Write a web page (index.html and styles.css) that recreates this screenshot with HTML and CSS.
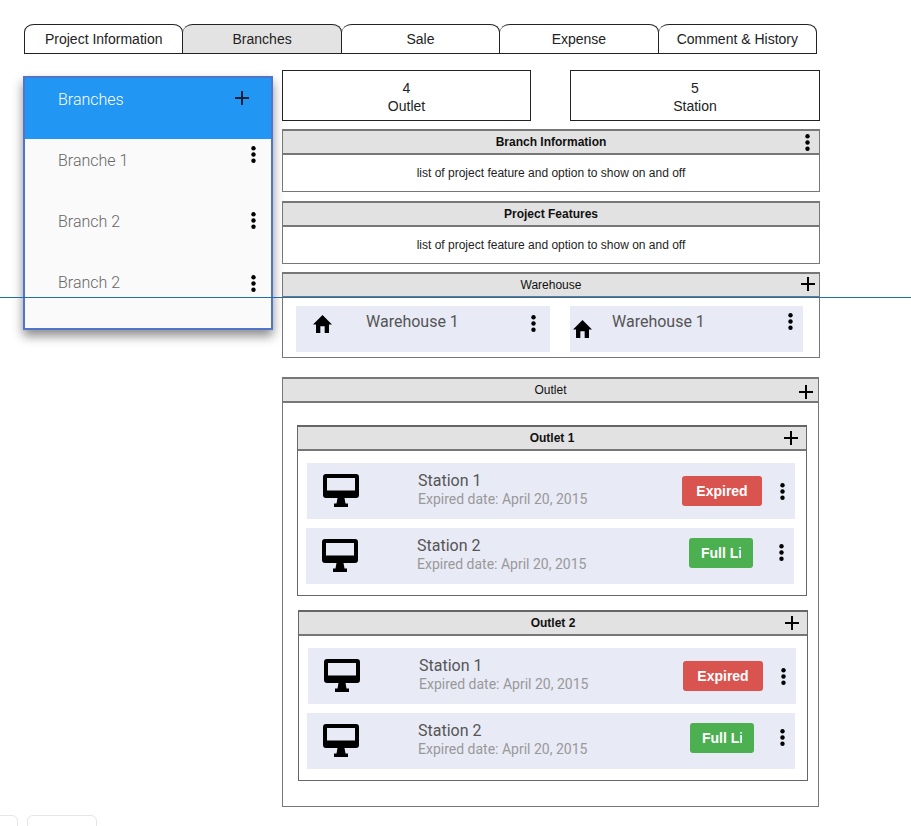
FILE: index.html
```html
<!DOCTYPE html>
<html lang="en">
<head>
<meta charset="utf-8">
<title>Branches</title>
<link rel="stylesheet" href="styles.css">
</head>
<body>
<svg class="defs" width="0" height="0" aria-hidden="true">
  <symbol id="i-plus" viewBox="0 0 16 16"><path d="M8 1v14M1 8h14" fill="none" stroke="currentColor" stroke-width="2"/></symbol>
  <symbol id="i-dots" viewBox="0 0 5 17"><circle cx="2.500" cy="2.300" r="2.200"/><circle cx="2.500" cy="8.500" r="2.200"/><circle cx="2.500" cy="14.700" r="2.200"/></symbol>
  <symbol id="i-home" viewBox="1 2 22 19" preserveAspectRatio="none"><path d="M9.500 21v-7h5v7h5v-9H23L12 2 1 12h3.500v9z"/></symbol>
  <symbol id="i-desk" viewBox="0 0 36 33">
    <path fill-rule="evenodd" d="M3 0h30a3 3 0 0 1 3 3v18a3 3 0 0 1-3 3H3a3 3 0 0 1-3-3V3a3 3 0 0 1 3-3zM4 4v12.500h28V4z"/>
    <path d="M14.500 24h7l1 5.500H25V33H11v-3.500h2.500z"/>
  </symbol>
</svg>
<div class="page">
  <div class="rule"></div>
  <nav class="tabs">
    <a class="tab">Project Information</a>
    <a class="tab tab-active">Branches</a>
    <a class="tab">Sale</a>
    <a class="tab">Expense</a>
    <a class="tab">Comment &amp; History</a>
  </nav>
  <div class="main">
    <aside class="side">
      <div class="side-head">
        <span>Branches</span>
        <svg class="plus side-plus"><use href="#i-plus"/></svg>
      </div>
      <div class="side-row"><span>Branche 1</span><svg class="dots side-dots-1"><use href="#i-dots"/></svg></div>
      <div class="side-row"><span>Branch 2</span><svg class="dots side-dots-2"><use href="#i-dots"/></svg></div>
      <div class="side-row"><span>Branch 2</span><svg class="dots side-dots-3"><use href="#i-dots"/></svg></div>
    </aside>
    <div class="content">
      <div class="stats">
        <div class="stat stat-a"><span>4</span><span>Outlet</span></div>
        <div class="stat"><span>5</span><span>Station</span></div>
      </div>
      <section class="panel">
        <header class="panel-head strong"><span class="title">Branch Information</span><svg class="dots head-dots"><use href="#i-dots"/></svg></header>
        <p class="panel-text">list of project feature and option to show on and off</p>
      </section>
      <section class="panel panel-gap">
        <header class="panel-head strong"><span class="title">Project Features</span></header>
        <p class="panel-text">list of project feature and option to show on and off</p>
      </section>
      <section class="panel panel-ware">
        <header class="panel-head"><span class="title">Warehouse</span><svg class="plus head-plus"><use href="#i-plus"/></svg></header>
        <div class="ware-list">
          <div class="ware ware-a">
            <svg class="home"><use href="#i-home"/></svg>
            <span class="ware-name">Warehouse 1</span>
            <svg class="dots ware-dots-a"><use href="#i-dots"/></svg>
          </div>
          <div class="ware ware-b">
            <svg class="home"><use href="#i-home"/></svg>
            <span class="ware-name">Warehouse 1</span>
            <svg class="dots ware-dots-b"><use href="#i-dots"/></svg>
          </div>
        </div>
      </section>
      <section class="panel panel-outlet">
        <header class="panel-head"><span class="title">Outlet</span><svg class="plus head-plus plus-low"><use href="#i-plus"/></svg></header>
        <div class="outlets">
          <section class="outlet outlet-one">
            <header class="panel-head strong"><span class="title">Outlet 1</span><svg class="plus head-plus plus-inner"><use href="#i-plus"/></svg></header>
            <div class="station">
              <svg class="desk"><use href="#i-desk"/></svg>
              <div class="st-text"><div class="st-name">Station 1</div><div class="st-date">Expired date: April 20, 2015</div></div>
              <span class="badge badge-red">Expired</span>
              <svg class="dots st-dots"><use href="#i-dots"/></svg>
            </div>
            <div class="station station-second">
              <svg class="desk"><use href="#i-desk"/></svg>
              <div class="st-text"><div class="st-name">Station 2</div><div class="st-date">Expired date: April 20, 2015</div></div>
              <span class="badge badge-green"><span class="clip">Full License</span></span>
              <svg class="dots st-dots st-dots-up"><use href="#i-dots"/></svg>
            </div>
          </section>
          <section class="outlet outlet-two">
            <header class="panel-head strong"><span class="title">Outlet 2</span><svg class="plus head-plus plus-inner"><use href="#i-plus"/></svg></header>
            <div class="station">
              <svg class="desk"><use href="#i-desk"/></svg>
              <div class="st-text"><div class="st-name">Station 1</div><div class="st-date">Expired date: April 20, 2015</div></div>
              <span class="badge badge-red">Expired</span>
              <svg class="dots st-dots"><use href="#i-dots"/></svg>
            </div>
            <div class="station station-second">
              <svg class="desk"><use href="#i-desk"/></svg>
              <div class="st-text"><div class="st-name">Station 2</div><div class="st-date">Expired date: April 20, 2015</div></div>
              <span class="badge badge-green"><span class="clip">Full License</span></span>
              <svg class="dots st-dots st-dots-up"><use href="#i-dots"/></svg>
            </div>
          </section>
        </div>
      </section>
    </div>
  </div>
  <div class="foot">
    <span class="foot-tab foot-a"></span>
    <span class="foot-tab foot-b"></span>
  </div>
</div>
</body>
</html>
```

FILE: styles.css
```css
* { box-sizing: border-box; }
html, body { margin: 0; padding: 0; background: #fff; }
body { font-family: Roboto, "Liberation Sans", sans-serif; color: #222; }
.defs { position: absolute; }
.page {
  position: relative;
  height: 826px;
  overflow: hidden;
  padding: 24px 0 0 23px;
}
.rule {
  position: absolute;
  left: 0; right: 0; top: 297px;
  height: 1px;
  background: #1f6fb0;
  z-index: 5;
}

/* tabs */
.tabs {
  display: flex;
  margin-left: 1px;
  width: 793px;
  height: 30px;
  font-family: "Liberation Sans", Arial, sans-serif;
}
.tab {
  flex: 1 1 0;
  display: flex;
  align-items: center;
  justify-content: center;
  border: 1px solid #222;
  border-left-width: 0;
  border-radius: 10px 10px 0 0 / 8px 8px 0 0;
  font-size: 14px;
  color: #222;
  background: #fff;
}
.tab:first-child { border-left-width: 1px; }
.tab-active { background: #e3e3e3; }

.main { display: flex; align-items: flex-start; gap: 9px; }

/* left list */
.side {
  width: 250px;
  height: 254px;
  margin-top: 22px;
  border: 2px solid #5173c9;
  background: #fafafa;
  box-shadow: 0 6px 10px rgba(0,0,0,.45);
  font-size: 16px;
  font-weight: 300;
  color: #666;
}
.side-head {
  height: 61px;
  background: #2196f3;
  color: #fff;
  display: flex;
  justify-content: space-between;
  align-items: flex-start;
  padding: 12px 21px 0 33px;
  line-height: 20px;
}
.side-row {
  height: 61px;
  display: flex;
  justify-content: space-between;
  align-items: flex-start;
  padding: 12px 15px 0 33px;
  line-height: 20px;
}
.plus { width: 16px; height: 16px; color: #000; display: block; }
.side-plus { margin-top: 0; color: #0b2038; }
.dots { width: 5px; height: 17px; fill: #000; display: block; flex: none; }
.side-dots-1 { margin-top: -5px; }
.side-dots-2 { margin-top: 0; }
.side-dots-3 { margin-top: 2px; }

/* right column */
.content { width: 538px; margin-top: 16px; }
.stats { display: flex; justify-content: space-between; }
.stat {
  width: 250px;
  height: 51px;
  border: 1px solid #222;
  display: flex;
  flex-direction: column;
  align-items: center;
  justify-content: center;
  font-family: "Liberation Sans", Arial, sans-serif;
  font-size: 14px;
  line-height: 18px;
  padding-top: 2px;
}
.stat-a { width: 249px; }
.panel {
  margin-top: 8px;
  border: 1px solid #777;
  border-top-width: 2px;
  background: #fff;
}
.panel-gap { margin-top: 9px; }
.panel-head {
  height: 24px;
  background: #e2e2e2;
  border-bottom: 2px solid #777;
  display: grid;
  grid-template-columns: 1fr auto 1fr;
  align-items: center;
  font-family: "Liberation Sans", Arial, sans-serif;
  font-size: 12px;
  color: #111;
}
.title { grid-column: 2; }
.strong .title { font-weight: 700; }
.head-dots { grid-column: 3; justify-self: end; margin-right: 9px; }
.head-plus { grid-column: 3; justify-self: end; margin-right: 3px; margin-top: -3px; }
.plus-low { margin-top: 4px; margin-right: 4px; }
.plus-inner { margin-top: -1px; margin-right: 7px; }
.panel-text {
  margin: 0;
  height: 36px;
  display: flex;
  align-items: center;
  justify-content: center;
  font-family: "Liberation Sans", Arial, sans-serif;
  font-size: 12px;
  color: #222;
}

/* warehouse */
.panel-ware { height: 86px; }
.ware-list { display: flex; padding: 8px 0 0 13px; gap: 20px; }
.ware {
  display: flex;
  align-items: flex-start;
  height: 46px;
  background: #e8eaf6;
  font-size: 16px;
  color: #555;
  line-height: 20px;
}
.ware-a { width: 254px; padding: 6px 14px 0 17px; }
.ware-b { width: 233px; padding: 6px 10px 0 3px; }
.home { width: 19px; height: 18px; fill: #000; flex: none; }
.ware-a .home { margin-top: 3px; }
.ware-b .home { margin-top: 8px; }
.ware-a .ware-name { margin-left: 34px; flex: 1; }
.ware-b .ware-name { margin-left: 20px; flex: 1; }
.ware-dots-a { margin-top: 3px; }
.ware-dots-b { margin-top: 1px; }

/* outlets */
.panel-outlet { margin-top: 19px; height: 430px; width: 537px; }
.outlets { padding-top: 22px; }
.outlet {
  width: 510px;
  height: 171px;
  border: 1px solid #666;
  border-top-width: 2px;
  background: #fff;
}
.outlet-one { margin-left: 14px; }
.outlet-two { margin-left: 15px; margin-top: 14px; }
.station {
  width: 488px;
  height: 56px;
  margin: 12px 0 0 9px;
  background: #e8eaf6;
  display: flex;
  align-items: center;
  padding-left: 16px;
}
.station-second { margin-top: 9px; margin-left: 8px; }
.desk { width: 36px; height: 33px; fill: #000; flex: none; margin-top: -2px; }
.st-text { margin-left: 59px; flex: 1; padding-bottom: 3px; }
.st-name { font-size: 16px; line-height: 20px; color: #555; }
.st-date { font-size: 14px; line-height: 17px; color: #999; }
.badge {
  height: 30px;
  border-radius: 3px;
  display: flex;
  align-items: center;
  justify-content: center;
  color: #fff;
  font-family: "Liberation Sans", Arial, sans-serif;
  font-size: 14px;
  font-weight: 700;
}
.badge-red { width: 80px; background: #d9534f; margin-right: 18px; }
.badge-green { width: 64px; background: #4caf50; margin-right: 26px; margin-top: -6px; }
.clip { display: block; width: 40px; overflow: hidden; white-space: nowrap; }
.st-dots { margin-right: 10px; }
.st-dots-up { margin-top: -8px; }

/* cut-off controls at the bottom */
.foot { display: flex; gap: 9px; margin: 8px 0 0 -30px; }
.foot-tab {
  height: 30px;
  background: #fff;
  border: 1px solid #e6e6e6;
  border-radius: 6px;
}
.foot-a { width: 25px; }
.foot-b { width: 70px; }
```
